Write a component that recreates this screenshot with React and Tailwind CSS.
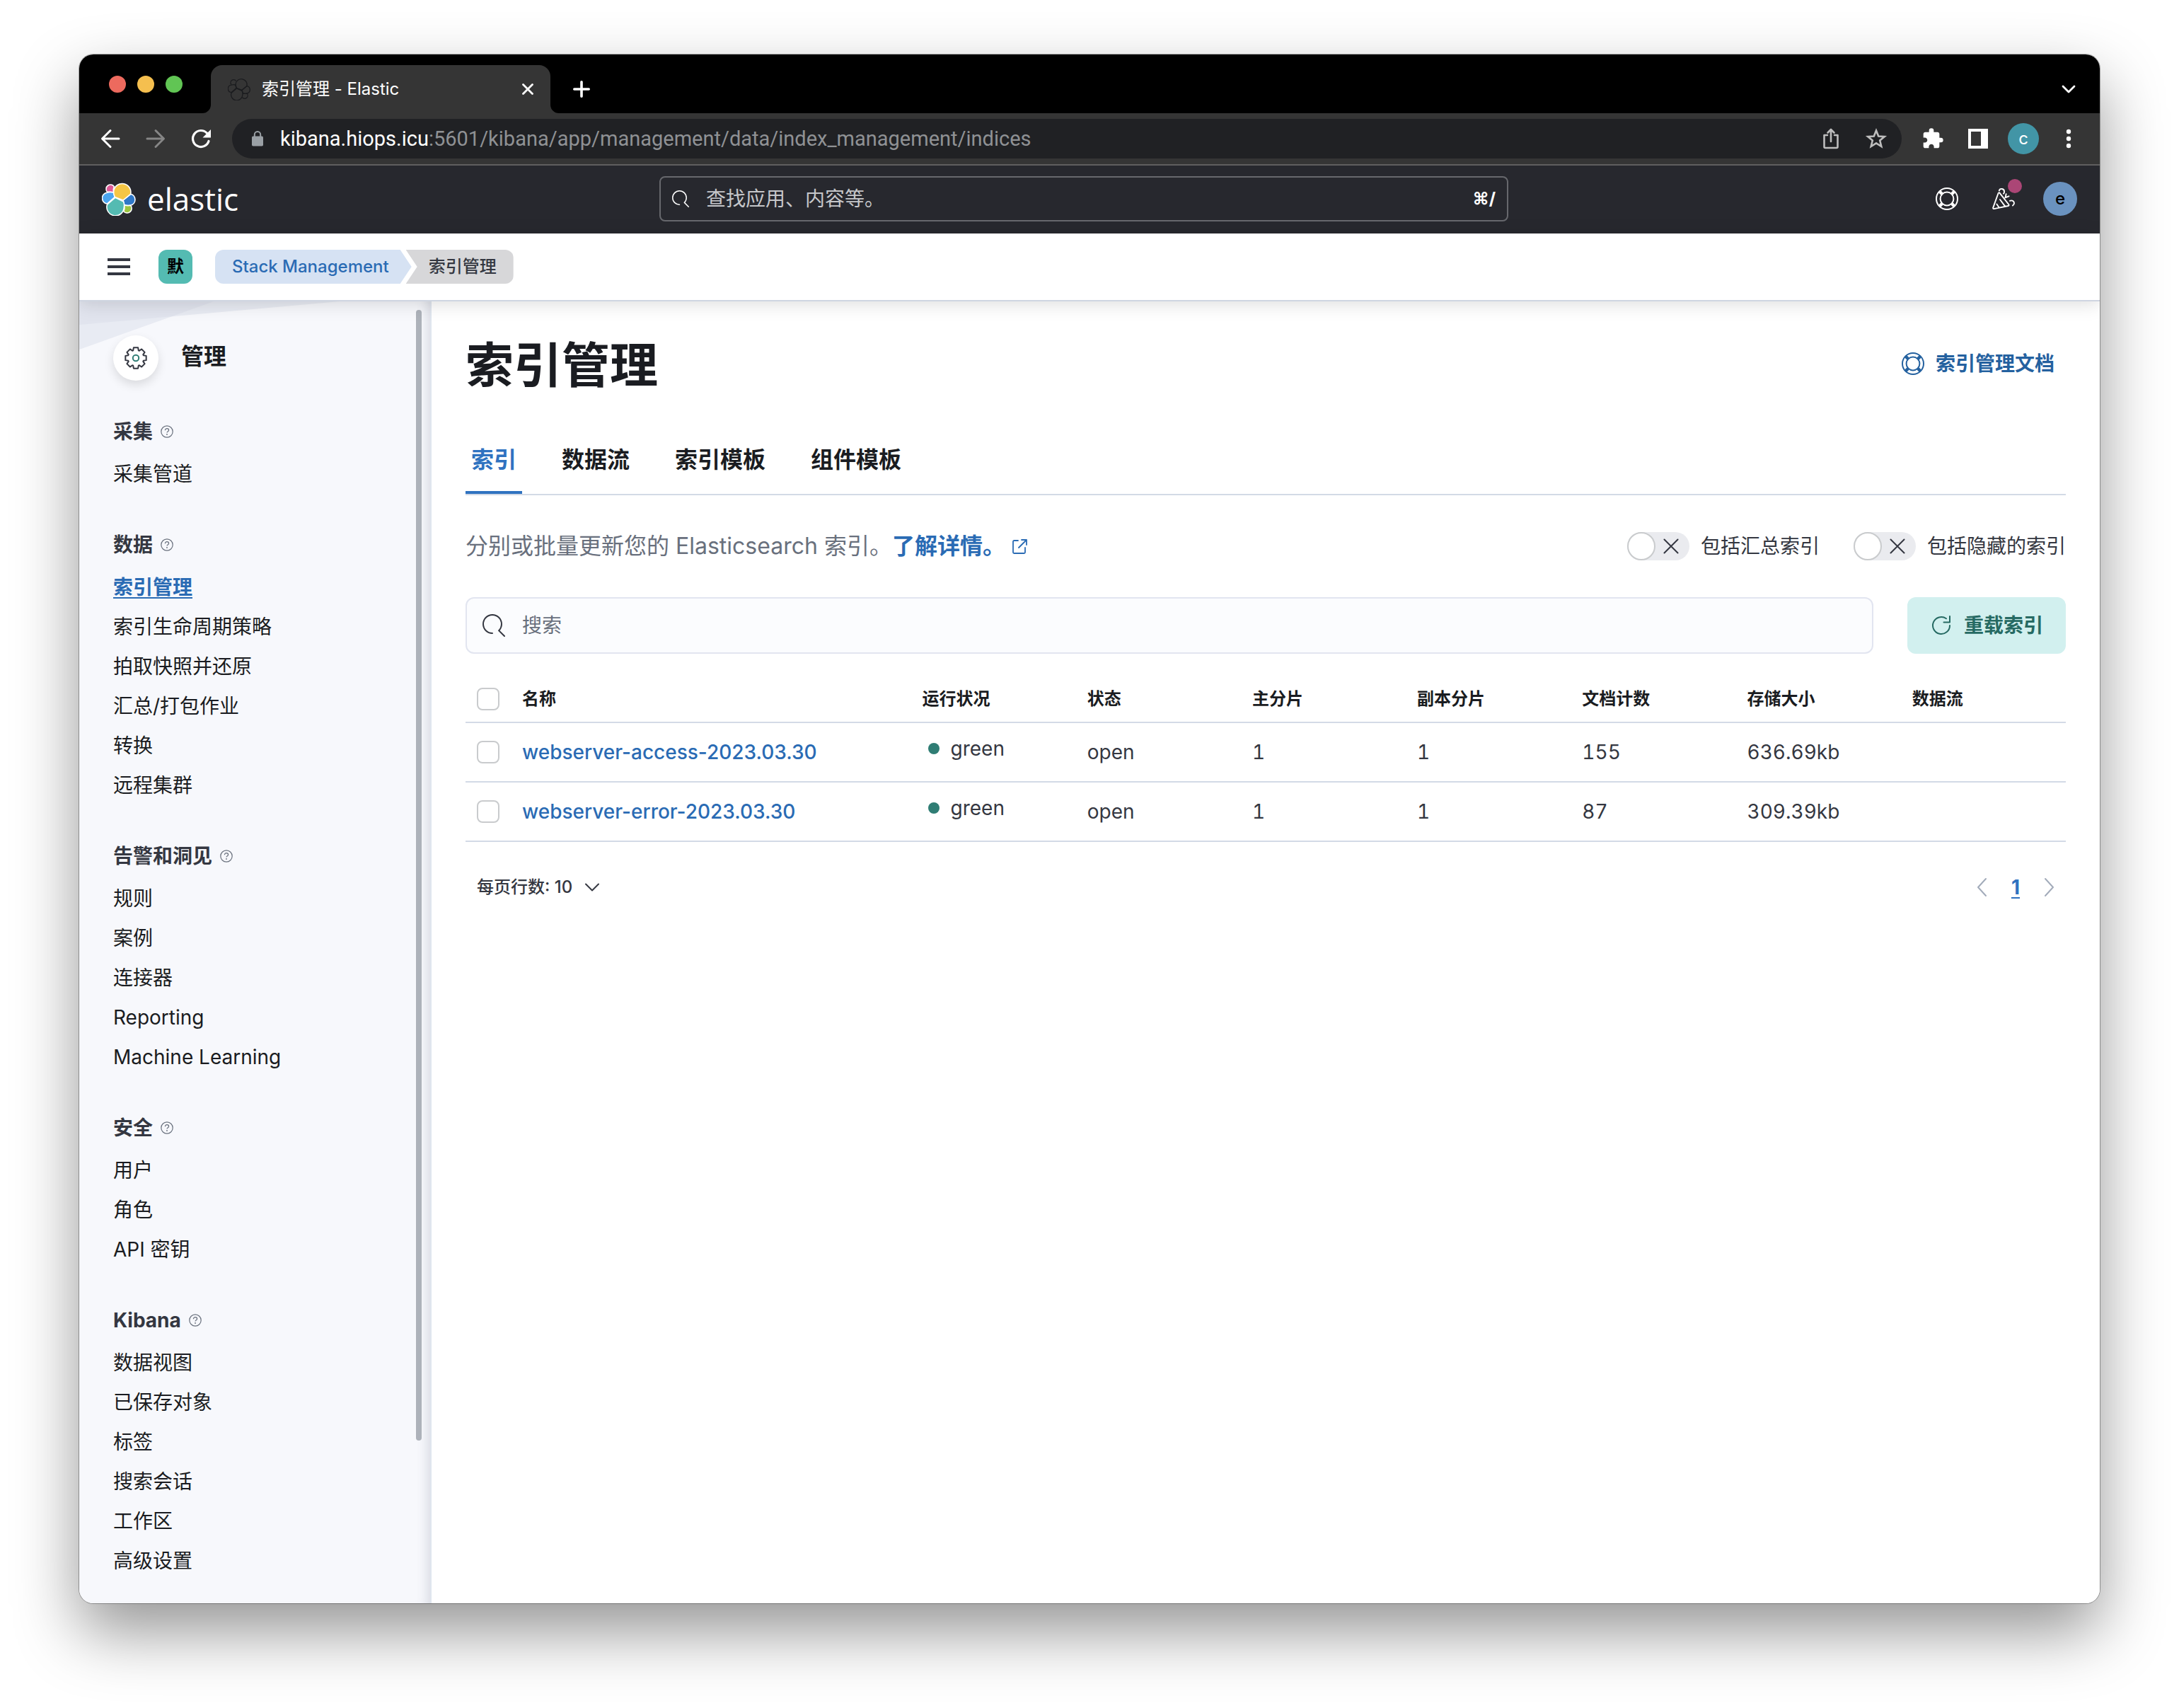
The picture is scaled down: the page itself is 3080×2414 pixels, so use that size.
import React from 'react';

const navGroups = [
  { title: '采集', items: ['采集管道'] },
  { title: '数据', items: ['索引管理', '索引生命周期策略', '拍取快照并还原', '汇总/打包作业', '转换', '远程集群'] },
  { title: '告警和洞见', items: ['规则', '案例', '连接器', 'Reporting', 'Machine Learning'] },
  { title: '安全', items: ['用户', '角色', 'API 密钥'] },
  { title: 'Kibana', items: ['数据视图', '已保存对象', '标签', '搜索会话', '工作区', '高级设置'] },
];

const tabs = ['索引', '数据流', '索引模板', '组件模板'];

const columns = ['运行状况', '状态', '主分片', '副本分片', '文档计数', '存储大小', '数据流'];

const rows = [
  { name: 'webserver-access-2023.03.30', health: 'green', status: 'open', primary: '1', replica: '1', docs: '155', size: '636.69kb' },
  { name: 'webserver-error-2023.03.30', health: 'green', status: 'open', primary: '1', replica: '1', docs: '87', size: '309.39kb' },
];

function SearchIcon({ className }) {
  return (
    <svg viewBox="0 0 16 16" fill="currentColor" className={className} aria-hidden="true">
      <path d="M11.271 11.978l3.872 3.873a.502.502 0 00.708 0 .502.502 0 000-.708l-3.565-3.564c2.38-2.747 2.267-6.923-.342-9.532-2.73-2.73-7.17-2.73-9.898 0-2.728 2.729-2.728 7.17 0 9.9a6.955 6.955 0 004.949 2.05.5.5 0 000-1 5.96 5.96 0 01-4.242-1.757 6.01 6.01 0 010-8.486 6.004 6.004 0 018.484 0 6.01 6.01 0 010 8.486.5.5 0 00-.034.738z" />
    </svg>
  );
}

function LifebuoyIcon({ className }) {
  return (
    <svg viewBox="0 0 32 32" fill="none" stroke="currentColor" strokeWidth="2" className={className} aria-hidden="true">
      <circle cx="16" cy="16" r="15" />
      <circle cx="16" cy="16" r="9.4" />
      <path strokeWidth="4.4" d="M5.6 5.6l3.6 3.6M26.4 5.6l-3.6 3.6M5.6 26.4l3.6-3.6M26.4 26.4l-3.6-3.6" />
    </svg>
  );
}

function QuestionIcon({ className }) {
  return (
    <svg viewBox="0 0 18 18" fill="none" stroke="currentColor" strokeWidth="1.2" className={className} aria-hidden="true">
      <circle cx="9" cy="9" r="8.2" />
      <path d="M6.4 7.2c0-1.5 1.1-2.5 2.6-2.5s2.6 1 2.6 2.2c0 1.8-2.6 1.7-2.6 3.7" />
      <circle cx="9" cy="13" r=".9" fill="currentColor" stroke="none" />
    </svg>
  );
}

function ElasticLogo({ className }) {
  return (
    <svg viewBox="0 0 48 48" className={className} aria-hidden="true" stroke="#fff" strokeWidth="1.6" strokeLinejoin="round">
      <path fill="#dd5a98" d="M7.3 14A5.6 5.6 0 0 1 17.2 6.4C16.4 9 16 12 16.4 15Z" />
      <path fill="#4ba5ef" d="M7 15.2C10 14.2 13.4 14.2 16.4 15L18.4 21.4L7.4 31A8 8 0 0 1 7 15.2Z" />
      <path fill="#2f78c8" d="M40.7 17.3A8.1 8.1 0 0 1 41 33C38 33.8 35 33.6 31.8 32.8L30 26Z" />
      <path fill="#9cc43f" d="M31.8 32.8C35 33.8 38 33.8 40.6 33.2A6 6 0 0 1 30.8 41.7C32 39 32.3 36 31.8 32.8Z" />
      <path fill="#f5c644" d="M18.2 21.4C16.6 18.4 16.3 15.4 16.7 12.4A12.2 12.2 0 1 1 40.6 17.3L30 26Z" />
      <path fill="#54bbb2" d="M19 22.2L30.6 28C31.6 30.6 31.8 33.4 31.3 36A12.2 12.2 0 1 1 7.4 32.2Z" />
    </svg>
  );
}

function ElasticOutline({ className }) {
  return (
    <svg viewBox="0 0 48 48" className={className} aria-hidden="true" fill="none" stroke="#1b1c1f" strokeWidth="2" strokeLinejoin="round">
      <path d="M7.3 14A5.6 5.6 0 0 1 17.2 6.4" />
      <path d="M7 15.2C10 14.2 13.4 14.2 16.4 15L18.4 21.4L7.4 31A8 8 0 0 1 7 15.2Z" />
      <path d="M40.7 17.3A8.1 8.1 0 0 1 41 33C38 33.8 35 33.6 31.8 32.8L30 26Z" />
      <path d="M31.8 32.8C35 33.8 38 33.8 40.6 33.2A6 6 0 0 1 30.8 41.7" />
      <path d="M18.2 21.4C16.6 18.4 16.3 15.4 16.7 12.4A12.2 12.2 0 1 1 40.6 17.3L30 26Z" />
      <path d="M19 22.2L30.6 28C31.6 30.6 31.8 33.4 31.3 36A12.2 12.2 0 1 1 7.4 32.2Z" />
    </svg>
  );
}

function GearIcon({ className }) {
  const points = [];
  for (let i = 0; i < 8; i += 1) {
    const base = (i * Math.PI) / 4;
    [[-0.34, 11.4], [-0.21, 15], [0.21, 15], [0.34, 11.4]].forEach(([a, r]) => {
      points.push(`${(16 + r * Math.sin(base + a)).toFixed(2)},${(16 - r * Math.cos(base + a)).toFixed(2)}`);
    });
  }
  return (
    <svg viewBox="0 0 32 32" fill="none" className={className} aria-hidden="true">
      <polygon points={points.join(' ')} stroke="#343741" strokeWidth="2" strokeLinejoin="round" />
      <circle cx="16" cy="16" r="4.2" stroke="#2f7d74" strokeWidth="2" />
    </svg>
  );
}

function Chevron({ d, className }) {
  return (
    <svg viewBox="0 0 32 32" fill="none" stroke="currentColor" strokeWidth="2" strokeLinecap="round" strokeLinejoin="round" className={className} aria-hidden="true">
      <path d={d} />
    </svg>
  );
}

function TabStrip() {
  return (
    <div className="flex h-[83px] items-end bg-black pr-8 text-white">
      <div className="flex h-full items-center gap-4 pl-[42px] pr-7">
        <span className="size-6 rounded-full bg-[#ed6a5e]" />
        <span className="size-6 rounded-full bg-[#f5bf4f]" />
        <span className="size-6 rounded-full bg-[#61c554]" />
      </div>
      <svg viewBox="0 0 12 12" className="size-3 fill-[#353535]" aria-hidden="true"><path d="M12 0v12H0A12 12 0 0 0 12 0z" /></svg>
      <div className="flex h-[68px] w-[480px] items-center rounded-t-2xl bg-[#353535] pl-6 pr-6">
        <ElasticOutline className="size-8" />
        <span className="ml-4 flex-1 text-[24px] leading-8">索引管理 - Elastic</span>
        <button type="button" aria-label="关闭标签页" className="size-4">
          <svg viewBox="0 0 16 16" className="size-4" stroke="#fff" strokeWidth="2.8" strokeLinecap="round"><path d="M1.5 1.5l13 13M14.5 1.5l-13 13" /></svg>
        </button>
      </div>
      <svg viewBox="0 0 12 12" className="size-3 fill-[#353535]" aria-hidden="true"><path d="M0 0v12h12A12 12 0 0 1 0 0z" /></svg>
      <button type="button" aria-label="新建标签页" className="ml-5 flex h-[68px] items-center">
        <svg viewBox="0 0 24 24" className="size-6" stroke="#fff" strokeWidth="3.6" strokeLinecap="round"><path d="M12 1.8v20.4M1.8 12h20.4" /></svg>
      </button>
      <button type="button" aria-label="搜索标签页" className="ml-auto flex h-[68px] items-center pr-0.5">
        <svg viewBox="0 0 20 14" className="h-3.5 w-5" fill="none" stroke="#fff" strokeWidth="2.8" strokeLinecap="round" strokeLinejoin="round"><path d="M2 3l8 8 8-8" /></svg>
      </button>
    </div>
  );
}

function AddressBar() {
  return (
    <div className="flex h-[74px] items-center border-b-2 border-[#5f5f5f] bg-[#353535] px-7 text-white">
      <button type="button" aria-label="后退" className="size-8">
        <svg viewBox="0 0 32 32" className="size-8" fill="none" stroke="#fff" strokeWidth="3" strokeLinecap="round" strokeLinejoin="round"><path d="M28 16H5M16 4.5L4.5 16 16 27.5" /></svg>
      </button>
      <button type="button" aria-label="前进" className="ml-8 size-8">
        <svg viewBox="0 0 32 32" className="size-8" fill="none" stroke="#868686" strokeWidth="3" strokeLinecap="round" strokeLinejoin="round"><path d="M4 16h23M16 4.5L27.5 16 16 27.5" /></svg>
      </button>
      <button type="button" aria-label="重新加载" className="ml-8 size-8">
        <svg viewBox="0 0 32 32" className="size-8" fill="none"><path d="M27 19.5A11.5 11.5 0 1 1 24.5 8.2" stroke="#fff" strokeWidth="3.2" strokeLinecap="round" /><path d="M30 3v11.5H18.5z" fill="#fff" /></svg>
      </button>
      <div className="ml-7 flex h-14 flex-1 items-center rounded-full bg-[#202124] pl-7 pr-5">
        <svg viewBox="0 0 16 22" className="h-[22px] w-4" aria-hidden="true"><rect y="7.5" width="16" height="14" rx="1.8" fill="#9aa0a5" /><path d="M3.8 8V5.2a4.2 4.2 0 0 1 8.4 0V8" fill="none" stroke="#9aa0a5" strokeWidth="2" /></svg>
        <span className="ml-6 flex-1 font-['Roboto','Noto_Sans_CJK_SC',sans-serif] text-[29px] leading-10 text-[#8f9194]">
          <span className="text-white">kibana.hiops.icu</span>:5601/kibana/app/management/data/index_management/indices
        </span>
        <button type="button" aria-label="分享" className="size-8">
          <svg viewBox="0 0 32 32" className="size-8" fill="none" stroke="#bdbdbd" strokeWidth="2.6" strokeLinecap="round" strokeLinejoin="round"><path d="M11 11H6.5v16.5a1.5 1.5 0 0 0 1.5 1.5h16a1.5 1.5 0 0 0 1.5-1.5V11H21M16 20V3.5M11.5 7.5L16 3l4.5 4.5" /></svg>
        </button>
        <button type="button" aria-label="收藏" className="ml-8 size-8">
          <svg viewBox="0 0 32 32" className="size-8" fill="none" stroke="#bdbdbd" strokeWidth="2.6"><path d="M16 4.5l3.2 8 8.6.6-6.6 5.5 2.1 8.4L16 22.4 8.7 27l2.1-8.4-6.6-5.5 8.6-.6z" /></svg>
        </button>
      </div>
      <button type="button" aria-label="扩展程序" className="ml-7 size-8">
        <svg viewBox="0 0 24 24" className="size-8" fill="#fff"><path d="M20.5 11H19V7c0-1.1-.9-2-2-2h-4V3.5a2.5 2.5 0 0 0-5 0V5H4c-1.1 0-1.99.9-1.99 2v3.8H3.5c1.49 0 2.7 1.21 2.7 2.7s-1.21 2.7-2.7 2.7H2V20c0 1.1.9 2 2 2h3.8v-1.5c0-1.49 1.21-2.7 2.7-2.7s2.7 1.21 2.7 2.7V22H17c1.1 0 2-.9 2-2v-4h1.5a2.5 2.5 0 0 0 0-5z" /></svg>
      </button>
      <button type="button" aria-label="侧边栏" className="ml-8 size-8">
        <svg viewBox="0 0 32 32" className="size-8"><path d="M2 2h28v28H2zM6 6v20h14V6z" fill="#fff" fillRule="evenodd" /></svg>
      </button>
      <button type="button" aria-label="用户" className="ml-[26px] flex size-11 items-center justify-center rounded-full bg-[#4295a6] text-[24px] leading-8">c</button>
      <button type="button" aria-label="菜单" className="ml-[26px] size-8">
        <svg viewBox="0 0 32 32" className="size-8" fill="#fff"><circle cx="16" cy="6" r="3.2" /><circle cx="16" cy="16" r="3.2" /><circle cx="16" cy="26" r="3.2" /></svg>
      </button>
    </div>
  );
}

function GlobalHeader() {
  return (
    <div className="flex h-24 items-center bg-[#27282e] px-8 pb-0.5 text-white">
      <a href="#home" className="flex flex-1 items-center gap-4">
        <ElasticLogo className="size-12" />
        <span className="font-['Open_Sans',sans-serif] text-[44px] leading-[48px]">elastic</span>
      </a>
      <label className="mr-4 flex h-16 w-[1200px] items-center rounded-lg border-2 border-[#67686d] px-4">
        <SearchIcon className="size-6" />
        <input type="text" aria-label="查找应用、内容等。" placeholder="查找应用、内容等。" className="ml-6 min-w-0 flex-1 bg-transparent text-[28px] leading-10 outline-none placeholder:text-[#c6c7ca]" />
        <span className="text-[24px] font-bold leading-8">⌘/</span>
      </label>
      <div className="flex flex-1 items-center justify-end">
        <button type="button" aria-label="帮助"><LifebuoyIcon className="size-8" /></button>
        <button type="button" aria-label="新闻" className="relative ml-12">
          <svg viewBox="0 0 32 32" className="size-8" fill="none" stroke="#fff" strokeWidth="1.9" strokeLinecap="round" strokeLinejoin="round">
            <path d="M8.5 8.2L1.2 28.6a1.2 1.2 0 0 0 1.4 1.5L22.6 26c1-.2 1.3-1.2.7-2L10.6 7.8c-.6-.8-1.7-.6-2.1.4zM11 17l7 9.4M6.4 23.5l3 4.5M9.8 4.5C10.6.8 17.5.8 17 6.5c0 1-.5 1.7-1 2.2M25 18.8c3-1.3 6 .4 6 3.2 0 1.6-.7 2.7-2 3.5M18.3 14.3l5.2-2M19.6 9.3l-.8 4" />
          </svg>
          <span className="absolute -right-2.5 -top-3 size-5 rounded-full bg-[#ab4676]" />
        </button>
        <button type="button" aria-label="账户" className="ml-10 flex size-12 items-center justify-center rounded-full bg-[#6a92bf] text-[24px] font-medium leading-8 text-black">e</button>
      </div>
    </div>
  );
}

function BreadcrumbBar() {
  return (
    <div className="relative z-10 flex h-24 items-center border-b-2 border-[#cfd5e1] bg-white pl-10 shadow-[0_4px_24px_rgba(0,0,0,0.13)]">
      <button type="button" aria-label="切换导航" className="flex w-8 flex-col gap-1.5">
        <span className="h-1 bg-[#343741]" />
        <span className="h-1 bg-[#343741]" />
        <span className="h-1 bg-[#343741]" />
      </button>
      <button type="button" aria-label="工作区默认" className="ml-10 flex size-12 items-center justify-center rounded-xl bg-[#54bbb2] text-[24px] font-bold leading-8 text-black">默</button>
      <nav aria-label="面包屑" className="ml-8 flex text-[24px] font-medium leading-[48px]">
        <a href="#stack" className="rounded-l-xl bg-[#d6e2f3] pl-6 pr-8 text-[#2a6bb4] [clip-path:polygon(0_0,calc(100%-16px)_0,100%_50%,calc(100%-16px)_100%,0_100%)]">Stack Management</a>
        <span className="-ml-2 rounded-r-xl bg-[#d7d7d9] pl-8 pr-6 text-[#343741] [clip-path:polygon(0_0,100%_0,100%_100%,0_100%,16px_50%)]">索引管理</span>
      </nav>
    </div>
  );
}

function Sidebar() {
  return (
    <aside className="relative w-[498px] shrink-0 border-r-2 border-[#dfe5ee] bg-[#f7f8fc] pb-8 shadow-[inset_-16px_0_16px_-12px_rgba(60,70,95,0.16)]">
      <svg viewBox="0 0 496 80" className="absolute left-0 top-0 h-20 w-[496px]" aria-hidden="true">
        <path d="M0 0H190L0 68z" fill="#d9deea" fillOpacity=".5" />
        <path d="M0 0H368L0 33z" fill="#d9deea" fillOpacity=".5" />
      </svg>
      <div className="absolute right-3 top-3 h-[1598px] w-2 rounded-full bg-[#adb2ba]" />
      <div className="relative flex items-center gap-8 pl-12 pt-12">
        <span className="flex size-16 items-center justify-center rounded-full bg-white shadow-[0_6px_14px_rgba(0,0,0,0.12)]">
          <GearIcon className="size-8" />
        </span>
        <h2 className="pb-1 text-[32px] font-bold leading-[60px] text-[#1a1c21]">管理</h2>
      </div>
      <nav aria-label="管理" className="relative">
        {navGroups.map((group) => (
          <section key={group.title} className="pl-12 pt-10">
            <h3 className="flex h-16 items-center gap-[11px] text-[28px] font-bold text-[#343741]">
              {group.title}
              <QuestionIcon className="size-[18px] text-[#69707d]" />
            </h3>
            <ul>
              {group.items.map((item) => (
                <li key={item} className="text-[28px] leading-[56px] text-[#1a1c21]">
                  {item === '索引管理' ? (
                    <a href="#indices" aria-current="page" className="font-bold text-[#2a6bb4] underline decoration-2 underline-offset-4">{item}</a>
                  ) : (
                    <a href="#nav">{item}</a>
                  )}
                </li>
              ))}
            </ul>
          </section>
        ))}
      </nav>
    </aside>
  );
}

function Switch({ label }) {
  return (
    <label className="flex items-center gap-4 text-[28px] leading-10 text-[#343741]">
      <input type="checkbox" role="switch" className="peer sr-only" />
      <span className="flex h-10 w-[88px] items-center rounded-full bg-[#eaebef]">
        <span className="size-10 rounded-full border-2 border-[#c9cbcd] bg-white" />
        <svg viewBox="0 0 22 22" className="ml-[11px] size-[22px]" stroke="#343741" strokeWidth="2" strokeLinecap="round" aria-hidden="true"><path d="M1.5 1.5l19 19M20.5 1.5l-19 19" /></svg>
      </span>
      {label}
    </label>
  );
}

function Checkbox({ label }) {
  return <input type="checkbox" aria-label={label} className="block size-8 appearance-none rounded-lg border-2 border-[#c9cbcd] bg-white" />;
}

function IndicesTable() {
  return (
    <table className="mt-8 w-full table-fixed border-collapse text-left tabular-nums text-[#343741]">
      <colgroup>
        <col className="w-16" />
        <col className="w-1/4" />
        {columns.map((c) => <col key={c} />)}
      </colgroup>
      <thead>
        <tr className="h-[65px] border-b-2 border-[#d3dae6] text-[24px] leading-8 text-[#1a1c21]">
          <th className="pl-4"><Checkbox label="选择所有行" /></th>
          <th className="px-4 font-bold">名称</th>
          {columns.map((c) => <th key={c} className="px-4 font-bold">{c}</th>)}
        </tr>
      </thead>
      <tbody>
        {rows.map((r) => (
          <tr key={r.name} className="h-[84px] border-b-2 border-[#d3dae6] text-[28px] leading-10">
            <td className="pl-4"><Checkbox label={`选择 ${r.name}`} /></td>
            <td className="px-4 normal-nums"><a href="#index" className="font-medium text-[#2a6bb4]">{r.name}</a></td>
            <td className="px-4">
              <span className="flex items-center gap-4 pb-2.5 pl-2">
                <span className="size-4 rounded-full bg-[#2f7d74]" />
                {r.health}
              </span>
            </td>
            <td className="px-4">{r.status}</td>
            <td className="px-4">{r.primary}</td>
            <td className="px-4">{r.replica}</td>
            <td className="px-4">{r.docs}</td>
            <td className="px-4">{r.size}</td>
            <td className="px-4" />
          </tr>
        ))}
      </tbody>
    </table>
  );
}

function Main() {
  return (
    <main className="min-w-0 flex-1 bg-white px-12 pt-12">
      <div className="flex h-20 items-center justify-between">
        <h1 className="pt-1 text-[68px] font-bold leading-[80px] text-[#1a1c21]">索引管理</h1>
        <a href="#docs" className="flex items-center gap-4 pr-4 text-[28px] font-bold leading-10 text-[#24619f]">
          <LifebuoyIcon className="size-8" />
          索引管理文档
        </a>
      </div>
      <div role="tablist" className="mt-12 flex gap-12 border-b-2 border-[#d3dae6]">
        {tabs.map((t, i) => (
          <button
            key={t}
            type="button"
            role="tab"
            aria-selected={i === 0}
            className={i === 0
              ? 'h-24 border-b-4 border-[#2f72c0] px-2 pt-1 text-[32px] font-bold leading-10 text-[#2f72c0]'
              : 'h-24 border-b-4 border-transparent px-2 pt-1 text-[32px] font-bold leading-10 text-[#1a1c21]'}
          >
            {t}
          </button>
        ))}
      </div>
      <div className="mt-12 flex items-center gap-12">
        <p className="flex flex-1 items-center text-[32px] leading-[48px] text-[#69707d]">
          分别或批量更新您的 Elasticsearch 索引。
          <a href="#learn" className="flex items-center font-bold text-[#2a6bb4]">
            了解详情。
            <svg viewBox="0 0 24 24" className="ml-2 size-6" fill="none" stroke="currentColor" strokeWidth="1.8" strokeLinecap="round" strokeLinejoin="round" aria-hidden="true"><path d="M10 4H4.5A1.5 1.5 0 0 0 3 5.500v15A1.5 1.5 0 0 0 4.500 22h14a1.5 1.5 0 0 0 1.500-1.500V14M15 3h7v7M22 3L11 14" /></svg>
          </a>
        </p>
        <Switch label="包括汇总索引" />
        <Switch label="包括隐藏的索引" />
      </div>
      <div className="mt-12 flex gap-12">
        <label className="flex h-20 flex-1 items-center rounded-xl border-2 border-[#e2e5f0] bg-[#fbfcfe] px-[22px]">
          <SearchIcon className="size-8 text-[#343741]" />
          <input type="search" aria-label="搜索" placeholder="搜索" className="ml-6 min-w-0 flex-1 bg-transparent text-[28px] leading-10 outline-none placeholder:text-[#69707d]" />
        </label>
        <button type="button" className="flex h-20 items-center gap-4 rounded-xl bg-[#d2f0ef] px-8 text-[28px] font-bold leading-10 text-[#266a63]">
          <svg viewBox="0 0 32 32" className="size-8" fill="none" stroke="currentColor" strokeWidth="2" strokeLinecap="round" strokeLinejoin="round" aria-hidden="true"><path d="M28 16A12 12 0 1 1 23 6.300M28 3v8.500h-8.500" /></svg>
          重载索引
        </button>
      </div>
      <IndicesTable />
      <div className="mt-8 flex h-16 items-center justify-between pl-4 pr-2">
        <button type="button" className="flex items-center gap-3 text-[24px] font-medium leading-8 text-[#343741]">
          每页行数: 10
          <Chevron className="size-8" d="M7 11.500l9 9 9-9" />
        </button>
        <nav aria-label="分页" className="flex items-center text-[28px] leading-8">
          <button type="button" disabled aria-label="上一页" className="text-[#a2abba]"><Chevron className="size-8" d="M21 4L10 16l11 12" /></button>
          <a href="#page-1" aria-current="page" className="mx-[25px] font-bold text-[#2f72c0] underline decoration-2 underline-offset-4">1</a>
          <button type="button" disabled aria-label="下一页" className="text-[#a2abba]"><Chevron className="size-8" d="M11 4l11 12-11 12" /></button>
        </nav>
      </div>
    </main>
  );
}

export default function App() {
  return (
    <div className="flex min-h-screen flex-col bg-white px-28 pb-[148px] pt-[77px] font-['Inter','Noto_Sans_CJK_SC',sans-serif]">
      <div className="flex flex-1 flex-col rounded-[20px] shadow-[0_0_0_1px_rgba(0,0,0,0.3),0_40px_90px_rgba(0,0,0,0.42)]">
        <div className="flex flex-1 flex-col overflow-hidden rounded-[20px]">
          <TabStrip />
          <AddressBar />
          <GlobalHeader />
          <BreadcrumbBar />
          <div className="flex flex-1">
            <Sidebar />
            <Main />
          </div>
        </div>
      </div>
    </div>
  );
}
